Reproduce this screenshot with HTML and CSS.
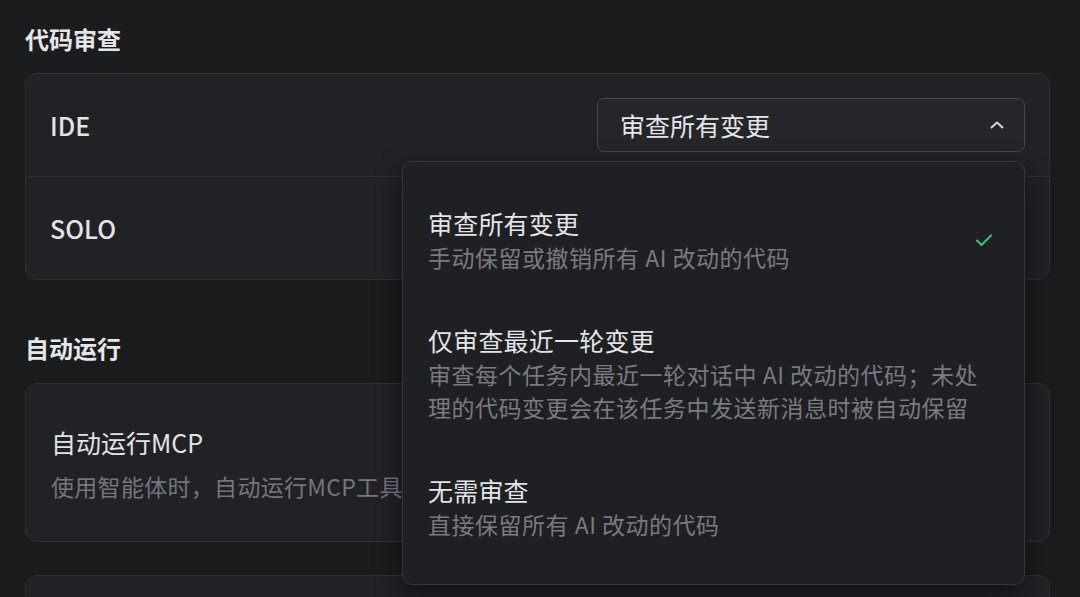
FILE: index.html
```html
<!DOCTYPE html>
<html lang="zh-CN">
<head>
<meta charset="utf-8">
<title>设置</title>
<link rel="stylesheet" href="styles.css">
</head>
<body>
<main class="page">
  <section class="section">
    <h2 class="section-title">代码审查</h2>
    <div class="card">
      <div class="row row-first">
        <span class="row-label">IDE</span>
        <div class="select">
          <button class="select-trigger" type="button">
            <span>审查所有变更</span>
            <svg class="chevron" width="14" height="8" viewBox="0 0 14 8"><path d="M1.5 6.5 L7 1.5 L12.5 6.5" fill="none" stroke="currentColor" stroke-width="2" stroke-linecap="round" stroke-linejoin="round"/></svg>
          </button>
          <div class="menu">
            <div class="option">
              <div class="option-text">
                <div class="option-title">审查所有变更</div>
                <div class="option-desc">手动保留或撤销所有 AI 改动的代码</div>
              </div>
              <svg class="check" width="18" height="14" viewBox="0 0 18 14"><path d="M2 7.5 L6.5 12 L16 2.5" fill="none" stroke="currentColor" stroke-width="2.2" stroke-linecap="round" stroke-linejoin="round"/></svg>
            </div>
            <div class="option">
              <div class="option-text">
                <div class="option-title">仅审查最近一轮变更</div>
                <div class="option-desc">审查每个任务内最近一轮对话中 AI 改动的代码；未处<br>理的代码变更会在该任务中发送新消息时被自动保留</div>
              </div>
            </div>
            <div class="option">
              <div class="option-text">
                <div class="option-title">无需审查</div>
                <div class="option-desc">直接保留所有 AI 改动的代码</div>
              </div>
            </div>
          </div>
        </div>
      </div>
      <div class="row">
        <span class="row-label">SOLO</span>
      </div>
    </div>
  </section>

  <section class="section section-second">
    <h2 class="section-title">自动运行</h2>
    <div class="card card-item">
      <div class="item-title">自动运行MCP</div>
      <div class="item-desc">使用智能体时，自动运行MCP工具</div>
    </div>
    <div class="card card-item card-third">
      <div class="item-title">&nbsp;</div>
    </div>
  </section>
</main>
</body>
</html>
```

FILE: styles.css
```css
* { box-sizing: border-box; }

html, body {
  margin: 0;
  padding: 0;
  background: #1b1c1e;
  overflow: hidden;
}

body {
  font-family: "Noto Sans CJK SC", "Noto Sans", sans-serif;
  color: #e2e2e4;
  width: 1080px;
  height: 597px;
}

.page {
  padding: 23px 30px 0 25px;
}

.section-title {
  margin: 0;
  font-size: 24px;
  line-height: 32px;
  font-weight: 700;
  color: #e6e6e8;
}

.section-second {
  margin-top: 52px;
}

.card {
  margin-top: 18px;
  background: #212226;
  border: 1px solid #303135;
  border-radius: 12px;
}

.section-second .card {
  margin-top: 19px;
}

.row {
  display: flex;
  align-items: center;
  justify-content: space-between;
  height: 102px;
  padding: 0 24px;
}

.row-first {
  height: 103px;
  border-bottom: 1px solid #303135;
}

.row-label {
  font-size: 25px;
  font-weight: 500;
  color: #e4e4e6;
}

.select {
  position: relative;
}

.select-trigger {
  display: flex;
  align-items: center;
  justify-content: space-between;
  width: 428px;
  height: 54px;
  padding: 0 22px 0 22px;
  background: #25262a;
  border: 1px solid #47484d;
  border-radius: 7px;
  font-family: inherit;
  font-size: 25px;
  color: #e6e6e8;
  cursor: pointer;
}

.chevron {
  color: #d6d6d8;
  margin-right: -2px;
}

.menu {
  position: absolute;
  top: 63px;
  right: 0;
  width: 623px;
  padding: 19px 0 19px;
  background: #1f2023;
  border: 1px solid #36373b;
  border-radius: 10px;
  box-shadow: 0 10px 28px rgba(0, 0, 0, 0.45);
  z-index: 10;
}

.option {
  display: flex;
  align-items: center;
  justify-content: space-between;
  padding: 24px 31px 24px 25px;
}

.option-title {
  font-size: 25px;
  line-height: 36px;
  color: #e4e4e6;
  letter-spacing: 0.2px;
}

.option-desc {
  font-size: 23px;
  line-height: 33px;
  color: #7a7b80;
  letter-spacing: 0.5px;
  white-space: nowrap;
}

.check {
  color: #3fb97c;
  flex: none;
}

.card-item {
  padding: 40px 25px 39px;
}

.item-title {
  font-size: 25px;
  line-height: 36px;
  color: #e4e4e6;
}

.item-desc {
  margin-top: 10px;
  font-size: 23px;
  line-height: 32px;
  color: #75767b;
  letter-spacing: 0.3px;
  white-space: nowrap;
  overflow: hidden;
}

.card-third {
  margin-top: 33px !important;
  height: 120px;
}
```
